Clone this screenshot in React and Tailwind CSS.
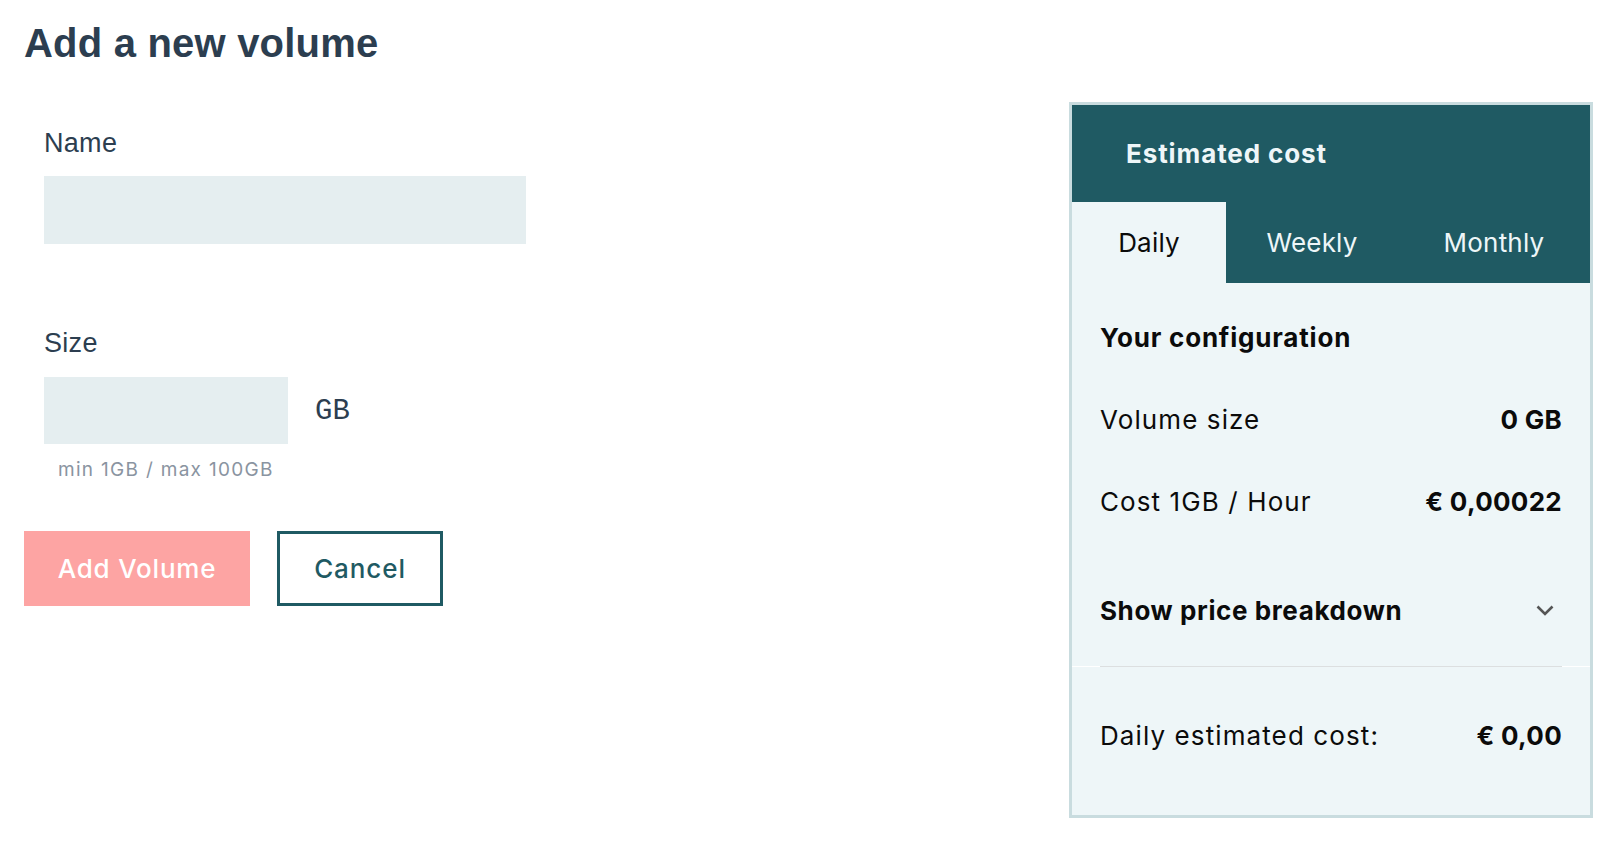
import React from "react";

const grot = { fontFamily: "Inter, 'Open Sans', sans-serif" };
const helv = { fontFamily: "'Liberation Sans', Arial, sans-serif" };

function Row({ label, value }) {
  return (
    <div className="flex items-center justify-between h-[32px]">
      <span className="text-[26px] tracking-[1.1px] text-[#0b0b0b]">{label}</span>
      <span className="text-[26px] font-bold tracking-[0.3px] text-[#0b0b0b]">{value}</span>
    </div>
  );
}

export default function App() {
  return (
    <div className="w-[1600px] h-[849px] bg-white flex overflow-hidden">
      <div className="w-[1069px] pl-[24px] pt-[19px]">
        <h1
          className="text-[40px] leading-[48px] font-bold text-[#2c3e50] tracking-[0.2px]"
          style={helv}
        >
          Add a new volume
        </h1>
        <div className="pl-[20px]">
          <div
            className="mt-[60px] text-[27px] leading-[32px] text-[#2c3e50] tracking-[0.3px]"
            style={helv}
          >
            Name
          </div>
          <div className="mt-[17px] w-[482px] h-[68px] bg-[#e5eef0]" />
          <div
            className="mt-[83px] text-[27px] leading-[32px] text-[#2c3e50] tracking-[0.3px]"
            style={helv}
          >
            Size
          </div>
          <div className="mt-[18px] flex items-center">
            <div className="w-[244px] h-[67px] bg-[#e5eef0]" />
            <span
              className="ml-[27px] mt-[3px] text-[29px] leading-[32px] text-[#2c3e50]"
              style={{ fontFamily: "'Liberation Mono', 'DejaVu Sans Mono', monospace" }}
            >
              GB
            </span>
          </div>
          <div
            className="mt-[14px] pl-[14px] text-[19px] leading-[24px] tracking-[1.3px] text-[#8a94a1]"
            style={grot}
          >
            min 1GB / max 100GB
          </div>
        </div>
        <div className="mt-[49px] flex gap-[27px]" style={grot}>
          <button className="w-[226px] h-[75px] bg-[#fda4a3] text-white text-[26px] font-medium tracking-[0.8px]">
            Add Volume
          </button>
          <button className="w-[166px] h-[75px] border-[3px] border-[#1f5a63] text-[#1f5a63] text-[26px] font-medium tracking-[0.9px]">
            Cancel
          </button>
        </div>
      </div>

      <div
        className="mt-[102px] w-[524px] h-[716px] border-[3px] border-[#c9dcdf] bg-[#eef6f8] flex flex-col"
        style={grot}
      >
        <div className="bg-[#1f5a63]">
          <div className="h-[97px] flex items-center pl-[54px] text-[26px] font-bold tracking-[0.9px] text-[#eef6f8]">
            Estimated cost
          </div>
          <div className="h-[81px] flex text-[26px] tracking-[0.2px]">
            <div className="w-[154px] bg-[#eef6f8] text-[#0b0b0b] flex items-center justify-center">
              Daily
            </div>
            <div className="w-[172px] text-[#eef6f8] flex items-center justify-center">
              Weekly
            </div>
            <div className="flex-1 text-[#eef6f8] flex items-center justify-center">
              Monthly
            </div>
          </div>
        </div>
        <div className="px-[28px]">
          <div className="pt-[39px] h-[71px] text-[26px] leading-[32px] font-bold tracking-[0.8px] text-[#0b0b0b]">
            Your configuration
          </div>
          <div className="mt-[49px]">
            <Row label="Volume size" value="0 GB" />
          </div>
          <div className="mt-[50px]">
            <Row label="Cost 1GB / Hour" value="€ 0,00022" />
          </div>
          <div className="mt-[77px] h-[32px] flex items-center justify-between">
            <span className="text-[26px] font-bold tracking-[0.6px] text-[#0b0b0b]">Show price breakdown</span>
            <svg width="18" height="11" viewBox="0 0 18 11" className="mr-[8px]">
              <path d="M1.5 1.5 L9 9 L16.5 1.5" fill="none" stroke="#555" strokeWidth="2.6" />
            </svg>
          </div>
        </div>
        <div className="mt-[40px] h-px bg-white">
          <div className="mx-[28px] h-px bg-[#dcdfe0]" />
        </div>
        <div className="px-[28px] mt-[52px]">
          <Row label="Daily estimated cost:" value="€ 0,00" />
        </div>
      </div>
    </div>
  );
}
